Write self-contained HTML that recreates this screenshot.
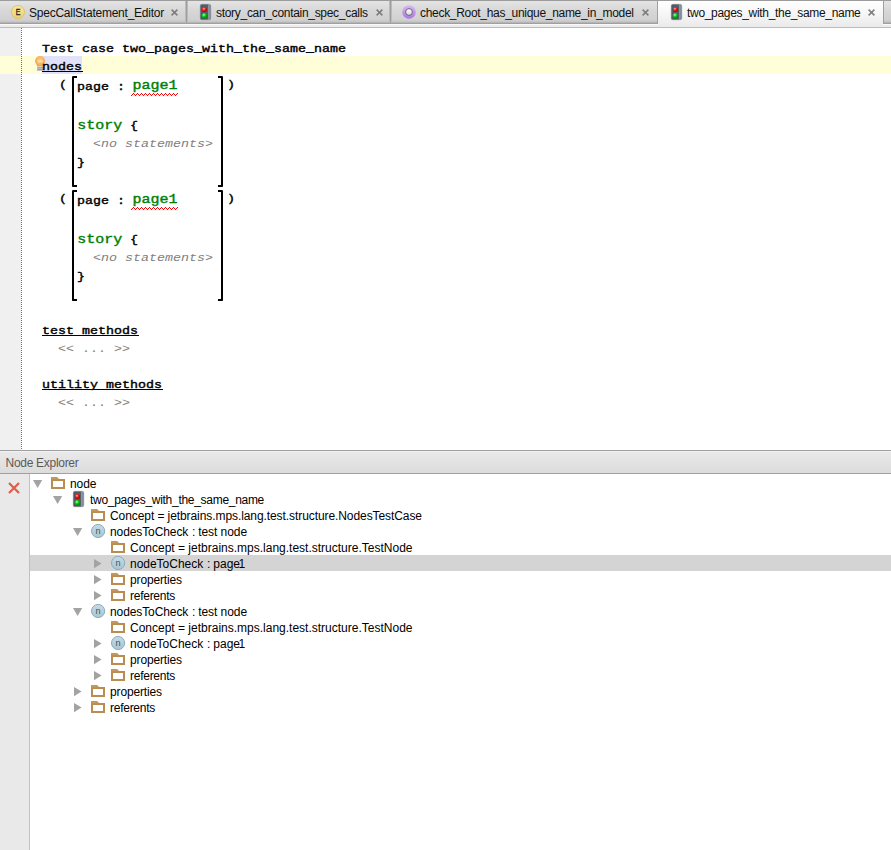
<!DOCTYPE html>
<html><head><meta charset="utf-8"><title>two_pages_with_the_same_name</title>
<style>
html,body{margin:0;padding:0;background:#fff;}
body{width:891px;height:850px;position:relative;overflow:hidden;font-family:"Liberation Sans",sans-serif;font-size:12px;color:#000;}
.abs{position:absolute;}
svg{position:absolute;overflow:visible;}
#tabbar{left:0;top:0;width:891px;height:24px;background:linear-gradient(#9c9c9c 0,#9c9c9c 1px,#e4e4e4 1px,#e2e2e2 3px,#d8d8d8 10px,#d0d0d0 20px,#c3c3c3 22px,#a0a0a0 23.3px,#9e9e9e 24px);}
#tabstrip{left:0;top:24px;width:891px;height:3px;background:linear-gradient(#fafafa 0,#fafafa 1px,#ececec 1px,#ebebeb 3px);}
#tabline{left:0;top:27px;width:891px;height:1px;background:#bcbcbc;}
.tabsep{top:1px;width:1px;height:22px;background:#9e9e9e;border-left:1px solid rgba(255,255,255,0.3);border-right:1px solid rgba(255,255,255,0.3);margin-left:-1px;}
.tabtxt{top:5px;height:16px;line-height:16px;white-space:pre;color:#111;}
#seltab{left:658px;top:1px;width:225px;height:26px;background:linear-gradient(#ffffff,#f6f6f6 50%,#eaeaea);}
.seledge{top:1px;width:1px;height:23px;background:#a0a0a0;}
#gutter{left:0;top:28px;width:21px;height:422px;background:#f0f0f0;}
#gutline{left:21px;top:28px;width:1px;height:422px;background:repeating-linear-gradient(#707070 0,#707070 1px,rgba(255,255,255,0) 1px,rgba(255,255,255,0) 2px);}
#curline{left:0;top:56px;width:891px;height:18px;background:#fffed9;}
#sel{left:42px;top:56px;width:40px;height:18px;background:#e1e1fa;}
.code{font-family:"Liberation Mono",monospace;font-size:13.333px;font-weight:normal;-webkit-text-stroke:0.45px currentColor;white-space:pre;line-height:20px;height:20px;color:#000;transform:scaleY(0.85);transform-origin:0 0;}
.kw{color:#007f00;}
.big{font-size:15px;}
.gr{color:#808080;font-weight:normal;-webkit-text-stroke:0;}
.it{font-style:italic;}
.ul{height:1px;background:#000;}
.br{box-sizing:border-box;width:5px;height:111px;border:2px solid #000;}
.brl{border-right:none;border-radius:1.5px 0 0 1.5px;}
.brr{border-left:none;border-radius:0 1.5px 1.5px 0;}
#split{left:0;top:450px;width:891px;height:1px;background:#a0a0a0;}
#nehead{left:0;top:451px;width:891px;height:22px;background:linear-gradient(#f2f2f2 0,#f2f2f2 1px,#e9e9e9 1px,#dcdcdc 22px);}
#neheadline{left:0;top:473px;width:891px;height:1px;background:#a0a0a0;}
#netitle{left:5px;top:455px;line-height:16px;color:#5a5a5a;white-space:pre;}
#nestrip{left:0;top:474px;width:29px;height:376px;background:#e9e9e9;border-right:1px solid #c0c0c0;}
#selrow{left:30px;top:555px;width:861px;height:16px;background:#d4d4d4;}
.row{height:16px;line-height:16px;white-space:pre;color:#000;}
</style></head>
<body>
<div id="tabbar" class="abs"></div><div id="tabstrip" class="abs"></div><div id="tabline" class="abs"></div><div id="seltab" class="abs"></div><div class="abs seledge" style="left:657px"></div><div class="abs seledge" style="left:883px"></div>
<div class="abs tabsep" style="left:186px"></div><div class="abs tabsep" style="left:390px"></div>
<svg style="left:11px;top:5px" width="14" height="14" viewBox="0 0 14 14"><defs><linearGradient id="eg" x1="0" x2="0" y1="0" y2="1"><stop offset="0" stop-color="#f8e9a0"/><stop offset="1" stop-color="#ecd06a"/></linearGradient></defs><circle cx="7" cy="7" r="6.5" fill="url(#eg)" stroke="#d9bd5c" stroke-width="0.8"/><text transform="translate(7 10) scale(0.84 1)" x="0" y="0" font-family="Liberation Sans, sans-serif" font-size="8.4" text-anchor="middle" fill="#22222e" stroke="#22222e" stroke-width="0.3">E</text></svg>
<div class="abs tabtxt" style="left:29px;top:5px;letter-spacing:-0.240px;">SpecCallStatement_Editor</div>
<svg style="left:171px;top:9px" width="7" height="7" viewBox="0 0 7 7"><path d="M0.6 0.6L6.4 6.4M6.4 0.6L0.6 6.4" stroke="#7d7d7d" stroke-width="1.5" fill="none"/></svg>
<svg style="left:200px;top:4px" width="11" height="16" viewBox="0 0 11 16"><defs><linearGradient id="tl200" x1="0" x2="1" y1="0" y2="0"><stop offset="0" stop-color="#4e5763"/><stop offset="0.70" stop-color="#566069"/><stop offset="0.78" stop-color="#8c96a1"/><stop offset="1" stop-color="#7b8590"/></linearGradient><radialGradient id="rd200" cx="0.4" cy="0.35" r="0.65"><stop offset="0" stop-color="#ffb0b0"/><stop offset="0.45" stop-color="#f02020"/><stop offset="1" stop-color="#a00000"/></radialGradient><radialGradient id="gn200" cx="0.4" cy="0.35" r="0.65"><stop offset="0" stop-color="#b0ffb0"/><stop offset="0.45" stop-color="#10d020"/><stop offset="1" stop-color="#008000"/></radialGradient></defs><rect x="0.25" y="0.25" width="10.5" height="15.5" rx="1.6" fill="url(#tl200)" stroke="#7a828e" stroke-width="0.5"/><circle cx="4.4" cy="5.5" r="2.6" fill="url(#rd200)"/><circle cx="4.4" cy="11.7" r="2.8" fill="url(#gn200)"/></svg>
<div class="abs tabtxt" style="left:216px;top:5px;letter-spacing:-0.300px;">story_can_contain_spec_calls</div>
<svg style="left:376px;top:9px" width="7" height="7" viewBox="0 0 7 7"><path d="M0.6 0.6L6.4 6.4M6.4 0.6L0.6 6.4" stroke="#7d7d7d" stroke-width="1.5" fill="none"/></svg>
<svg style="left:402px;top:5px" width="14" height="14" viewBox="0 0 14 14"><defs><linearGradient id="pg" x1="0" x2="0" y1="0" y2="1"><stop offset="0" stop-color="#d9b8f4"/><stop offset="1" stop-color="#a877e0"/></linearGradient><linearGradient id="pw" x1="0" x2="0" y1="0" y2="1"><stop offset="0" stop-color="#ffffff"/><stop offset="1" stop-color="#d8d8d8"/></linearGradient></defs><circle cx="7" cy="7" r="6.8" fill="url(#pg)"/><circle cx="7" cy="7" r="3.4" fill="url(#pw)" stroke="#6a6078" stroke-width="1"/></svg>
<div class="abs tabtxt" style="left:420px;top:5px;letter-spacing:-0.300px;">check_Root_has_unique_name_in_model</div>
<svg style="left:642px;top:9px" width="7" height="7" viewBox="0 0 7 7"><path d="M0.6 0.6L6.4 6.4M6.4 0.6L0.6 6.4" stroke="#7d7d7d" stroke-width="1.5" fill="none"/></svg>
<svg style="left:671px;top:4px" width="11" height="16" viewBox="0 0 11 16"><defs><linearGradient id="tl671" x1="0" x2="1" y1="0" y2="0"><stop offset="0" stop-color="#4e5763"/><stop offset="0.70" stop-color="#566069"/><stop offset="0.78" stop-color="#8c96a1"/><stop offset="1" stop-color="#7b8590"/></linearGradient><radialGradient id="rd671" cx="0.4" cy="0.35" r="0.65"><stop offset="0" stop-color="#ffb0b0"/><stop offset="0.45" stop-color="#f02020"/><stop offset="1" stop-color="#a00000"/></radialGradient><radialGradient id="gn671" cx="0.4" cy="0.35" r="0.65"><stop offset="0" stop-color="#b0ffb0"/><stop offset="0.45" stop-color="#10d020"/><stop offset="1" stop-color="#008000"/></radialGradient></defs><rect x="0.25" y="0.25" width="10.5" height="15.5" rx="1.6" fill="url(#tl671)" stroke="#7a828e" stroke-width="0.5"/><circle cx="4.4" cy="5.5" r="2.6" fill="url(#rd671)"/><circle cx="4.4" cy="11.7" r="2.8" fill="url(#gn671)"/></svg>
<div class="abs tabtxt" style="left:687px;top:5px;letter-spacing:-0.310px;">two_pages_with_the_same_name</div>
<svg style="left:868px;top:9px" width="7" height="7" viewBox="0 0 7 7"><path d="M0.6 0.6L6.4 6.4M6.4 0.6L0.6 6.4" stroke="#7d7d7d" stroke-width="1.5" fill="none"/></svg>
<div id="gutter" class="abs"></div><div id="curline" class="abs"></div><div id="gutline" class="abs"></div><div id="sel" class="abs"></div>
<svg style="left:35px;top:56px" width="11" height="16" viewBox="0 0 11 16"><defs><radialGradient id="bg" cx="0.5" cy="0.42" r="0.62"><stop offset="0" stop-color="#fbcf8c"/><stop offset="0.6" stop-color="#f5b562"/><stop offset="1" stop-color="#eb9c40"/></radialGradient></defs><path d="M5.1 0 A5.1 5.1 0 0 1 10.2 5.1 C10.2 7.6 8.3 8.4 8 10.4 L2.2 10.4 C1.9 8.4 0 7.6 0 5.1 A5.1 5.1 0 0 1 5.1 0Z" fill="url(#bg)"/><path d="M2.7 4.3L3.9 6.4L5.1 4.3L6.3 6.4L7.5 4.3" stroke="#fdebc8" stroke-width="0.8" fill="none"/><rect x="2.1" y="10.4" width="6" height="4.6" fill="#d2d2d2"/><rect x="2.1" y="11.3" width="6" height="1" fill="#949494"/><rect x="2.1" y="13.2" width="6" height="1" fill="#949494"/></svg>
<div class="abs code" style="left:42px;top:40.6px;">Test case two_pages_with_the_same_name</div>
<div class="abs code" style="left:42px;top:58.6px;">nodes</div>
<div class="abs ul" style="left:42px;top:71px;width:41px"></div>
<div class="abs code" style="left:59px;top:76.6px;">(</div>
<div class="abs code" style="left:227px;top:76.6px;">)</div>
<div class="abs br brl" style="left:72px;top:76px"></div>
<div class="abs br brr" style="left:218px;top:76px"></div>
<div class="abs code" style="left:77px;top:78.6px;">page :</div>
<div class="abs code kw big" style="left:132.5px;top:78.1px;">page1</div>
<svg style="left:131px;top:93px" width="47" height="3" viewBox="0 0 47 3"><path d="M0 2h1v1h-1zM1 1h1v1h-1zM2 0h1v1h-1zM3 1h1v1h-1zM4 2h1v1h-1zM5 1h1v1h-1zM6 0h1v1h-1zM7 1h1v1h-1zM8 2h1v1h-1zM9 1h1v1h-1zM10 0h1v1h-1zM11 1h1v1h-1zM12 2h1v1h-1zM13 1h1v1h-1zM14 0h1v1h-1zM15 1h1v1h-1zM16 2h1v1h-1zM17 1h1v1h-1zM18 0h1v1h-1zM19 1h1v1h-1zM20 2h1v1h-1zM21 1h1v1h-1zM22 0h1v1h-1zM23 1h1v1h-1zM24 2h1v1h-1zM25 1h1v1h-1zM26 0h1v1h-1zM27 1h1v1h-1zM28 2h1v1h-1zM29 1h1v1h-1zM30 0h1v1h-1zM31 1h1v1h-1zM32 2h1v1h-1zM33 1h1v1h-1zM34 0h1v1h-1zM35 1h1v1h-1zM36 2h1v1h-1zM37 1h1v1h-1zM38 0h1v1h-1zM39 1h1v1h-1zM40 2h1v1h-1zM41 1h1v1h-1zM42 0h1v1h-1zM43 1h1v1h-1zM44 2h1v1h-1zM45 1h1v1h-1zM46 0h1v1h-1z" fill="#ff0000" shape-rendering="crispEdges"/></svg>
<div class="abs code kw big" style="left:77.3px;top:118.1px;">story</div>
<div class="abs code" style="left:130px;top:117.6px;">{</div>
<div class="abs code gr it" style="left:93px;top:136.2px;">&lt;no statements&gt;</div>
<div class="abs code" style="left:77px;top:154.6px;">}</div>
<div class="abs code" style="left:59px;top:190.6px;">(</div>
<div class="abs code" style="left:227px;top:190.6px;">)</div>
<div class="abs br brl" style="left:72px;top:190px"></div>
<div class="abs br brr" style="left:218px;top:190px"></div>
<div class="abs code" style="left:77px;top:192.6px;">page :</div>
<div class="abs code kw big" style="left:132.5px;top:192.1px;">page1</div>
<svg style="left:131px;top:207px" width="47" height="3" viewBox="0 0 47 3"><path d="M0 2h1v1h-1zM1 1h1v1h-1zM2 0h1v1h-1zM3 1h1v1h-1zM4 2h1v1h-1zM5 1h1v1h-1zM6 0h1v1h-1zM7 1h1v1h-1zM8 2h1v1h-1zM9 1h1v1h-1zM10 0h1v1h-1zM11 1h1v1h-1zM12 2h1v1h-1zM13 1h1v1h-1zM14 0h1v1h-1zM15 1h1v1h-1zM16 2h1v1h-1zM17 1h1v1h-1zM18 0h1v1h-1zM19 1h1v1h-1zM20 2h1v1h-1zM21 1h1v1h-1zM22 0h1v1h-1zM23 1h1v1h-1zM24 2h1v1h-1zM25 1h1v1h-1zM26 0h1v1h-1zM27 1h1v1h-1zM28 2h1v1h-1zM29 1h1v1h-1zM30 0h1v1h-1zM31 1h1v1h-1zM32 2h1v1h-1zM33 1h1v1h-1zM34 0h1v1h-1zM35 1h1v1h-1zM36 2h1v1h-1zM37 1h1v1h-1zM38 0h1v1h-1zM39 1h1v1h-1zM40 2h1v1h-1zM41 1h1v1h-1zM42 0h1v1h-1zM43 1h1v1h-1zM44 2h1v1h-1zM45 1h1v1h-1zM46 0h1v1h-1z" fill="#ff0000" shape-rendering="crispEdges"/></svg>
<div class="abs code kw big" style="left:77.3px;top:232.1px;">story</div>
<div class="abs code" style="left:130px;top:231.6px;">{</div>
<div class="abs code gr it" style="left:93px;top:250.20000000000002px;">&lt;no statements&gt;</div>
<div class="abs code" style="left:77px;top:268.6px;">}</div>
<div class="abs code" style="left:42px;top:322.6px;">test methods</div>
<div class="abs ul" style="left:42px;top:335px;width:97px"></div>
<div class="abs code gr" style="left:58px;top:340.6px;">&lt;&lt; ... &gt;&gt;</div>
<div class="abs code" style="left:42px;top:376.6px;">utility methods</div>
<div class="abs ul" style="left:42px;top:389px;width:121px"></div>
<div class="abs code gr" style="left:58px;top:394.6px;">&lt;&lt; ... &gt;&gt;</div>
<div id="split" class="abs"></div><div id="nehead" class="abs"></div><div id="neheadline" class="abs"></div>
<div class="abs " style="left:5.5px;top:455px;letter-spacing:-0.290px;line-height:16px;color:#5a5a5a;white-space:pre;">Node Explorer</div>
<div id="nestrip" class="abs"></div><div id="selrow" class="abs"></div>
<svg style="left:8px;top:482px" width="12" height="12" viewBox="0 0 12 12"><path d="M1 1L11 11M11 1L1 11" stroke="#e05c48" stroke-width="2.2" fill="none"/></svg>
<svg style="left:33px;top:480px" width="10" height="8" viewBox="0 0 10 8"><path d="M0 0L9.2 0L4.6 8Z" fill="#a3a3a3"/></svg>
<svg style="left:51px;top:477px" width="14" height="12" viewBox="0 0 14 12"><path d="M0 0.4 Q0 0 0.4 0 L6 0 L8 2 L14 2 L14 12 L0 12 Z" fill="#b98d52"/><path d="M0.3 0.3 L5.9 0.3 L7.6 2.2 L0.3 2.2Z" fill="#c29a62"/><rect x="2" y="4" width="10" height="6" fill="#fff"/></svg>
<div class="abs row" style="left:70px;top:476px;letter-spacing:-0.050px;">node</div>
<svg style="left:53px;top:496px" width="10" height="8" viewBox="0 0 10 8"><path d="M0 0L9.2 0L4.6 8Z" fill="#a3a3a3"/></svg>
<svg style="left:73px;top:491px" width="11" height="16" viewBox="0 0 11 16"><defs><linearGradient id="tl73" x1="0" x2="1" y1="0" y2="0"><stop offset="0" stop-color="#4e5763"/><stop offset="0.70" stop-color="#566069"/><stop offset="0.78" stop-color="#8c96a1"/><stop offset="1" stop-color="#7b8590"/></linearGradient><radialGradient id="rd73" cx="0.4" cy="0.35" r="0.65"><stop offset="0" stop-color="#ffb0b0"/><stop offset="0.45" stop-color="#f02020"/><stop offset="1" stop-color="#a00000"/></radialGradient><radialGradient id="gn73" cx="0.4" cy="0.35" r="0.65"><stop offset="0" stop-color="#b0ffb0"/><stop offset="0.45" stop-color="#10d020"/><stop offset="1" stop-color="#008000"/></radialGradient></defs><rect x="0.25" y="0.25" width="10.5" height="15.5" rx="1.6" fill="url(#tl73)" stroke="#7a828e" stroke-width="0.5"/><circle cx="4.4" cy="5.5" r="2.6" fill="url(#rd73)"/><circle cx="4.4" cy="11.7" r="2.8" fill="url(#gn73)"/></svg>
<div class="abs row" style="left:90px;top:492px;letter-spacing:-0.290px;">two_pages_with_the_same_name</div>
<svg style="left:91px;top:509px" width="14" height="12" viewBox="0 0 14 12"><path d="M0 0.4 Q0 0 0.4 0 L6 0 L8 2 L14 2 L14 12 L0 12 Z" fill="#b98d52"/><path d="M0.3 0.3 L5.9 0.3 L7.6 2.2 L0.3 2.2Z" fill="#c29a62"/><rect x="2" y="4" width="10" height="6" fill="#fff"/></svg>
<div class="abs row" style="left:110px;top:508px;letter-spacing:-0.080px;">Concept = jetbrains.mps.lang.test.structure.NodesTestCase</div>
<svg style="left:73px;top:528px" width="10" height="8" viewBox="0 0 10 8"><path d="M0 0L9.2 0L4.6 8Z" fill="#a3a3a3"/></svg>
<svg style="left:90px;top:523px" width="16" height="16" viewBox="0 0 16 16"><defs><linearGradient id="ng90523" x1="0" x2="0" y1="0" y2="1"><stop offset="0" stop-color="#c6dbe4"/><stop offset="1" stop-color="#a7c6d4"/></linearGradient></defs><circle cx="8.1" cy="8" r="6.6" fill="url(#ng90523)" stroke="#8eacba" stroke-width="1"/><text x="8.1" y="11" font-family="Liberation Sans, sans-serif" font-size="9.2" text-anchor="middle" fill="#48525c">n</text></svg>
<div class="abs row" style="left:110px;top:524px;letter-spacing:-0.100px;">nodesToCheck</div>
<div class="abs row" style="left:192px;top:524px;">:</div>
<div class="abs row" style="left:198.2px;top:524px;letter-spacing:-0.060px;">test node</div>
<svg style="left:111px;top:541px" width="14" height="12" viewBox="0 0 14 12"><path d="M0 0.4 Q0 0 0.4 0 L6 0 L8 2 L14 2 L14 12 L0 12 Z" fill="#b98d52"/><path d="M0.3 0.3 L5.9 0.3 L7.6 2.2 L0.3 2.2Z" fill="#c29a62"/><rect x="2" y="4" width="10" height="6" fill="#fff"/></svg>
<div class="abs row" style="left:130px;top:540px;">Concept = jetbrains.mps.lang.test.structure.TestNode</div>
<svg style="left:94px;top:559px" width="8" height="10" viewBox="0 0 8 10"><path d="M0 0L0 9.2L7.6 4.6Z" fill="#a3a3a3"/></svg>
<svg style="left:110px;top:555px" width="16" height="16" viewBox="0 0 16 16"><defs><linearGradient id="ng110555" x1="0" x2="0" y1="0" y2="1"><stop offset="0" stop-color="#c6dbe4"/><stop offset="1" stop-color="#a7c6d4"/></linearGradient></defs><circle cx="8.1" cy="8" r="6.6" fill="url(#ng110555)" stroke="#8eacba" stroke-width="1"/><text x="8.1" y="11" font-family="Liberation Sans, sans-serif" font-size="9.2" text-anchor="middle" fill="#48525c">n</text></svg>
<div class="abs row" style="left:130px;top:556px;letter-spacing:-0.020px;">nodeToCheck</div>
<div class="abs row" style="left:207px;top:556px;">:</div>
<div class="abs row" style="left:213.3px;top:556px;">page</div>
<div class="abs row" style="left:238.4px;top:556px;">1</div>
<svg style="left:94px;top:575px" width="8" height="10" viewBox="0 0 8 10"><path d="M0 0L0 9.2L7.6 4.6Z" fill="#a3a3a3"/></svg>
<svg style="left:111px;top:573px" width="14" height="12" viewBox="0 0 14 12"><path d="M0 0.4 Q0 0 0.4 0 L6 0 L8 2 L14 2 L14 12 L0 12 Z" fill="#b98d52"/><path d="M0.3 0.3 L5.9 0.3 L7.6 2.2 L0.3 2.2Z" fill="#c29a62"/><rect x="2" y="4" width="10" height="6" fill="#fff"/></svg>
<div class="abs row" style="left:130px;top:572px;letter-spacing:-0.140px;">properties</div>
<svg style="left:94px;top:591px" width="8" height="10" viewBox="0 0 8 10"><path d="M0 0L0 9.2L7.6 4.6Z" fill="#a3a3a3"/></svg>
<svg style="left:111px;top:589px" width="14" height="12" viewBox="0 0 14 12"><path d="M0 0.4 Q0 0 0.4 0 L6 0 L8 2 L14 2 L14 12 L0 12 Z" fill="#b98d52"/><path d="M0.3 0.3 L5.9 0.3 L7.6 2.2 L0.3 2.2Z" fill="#c29a62"/><rect x="2" y="4" width="10" height="6" fill="#fff"/></svg>
<div class="abs row" style="left:130px;top:588px;letter-spacing:-0.260px;">referents</div>
<svg style="left:73px;top:608px" width="10" height="8" viewBox="0 0 10 8"><path d="M0 0L9.2 0L4.6 8Z" fill="#a3a3a3"/></svg>
<svg style="left:90px;top:603px" width="16" height="16" viewBox="0 0 16 16"><defs><linearGradient id="ng90603" x1="0" x2="0" y1="0" y2="1"><stop offset="0" stop-color="#c6dbe4"/><stop offset="1" stop-color="#a7c6d4"/></linearGradient></defs><circle cx="8.1" cy="8" r="6.6" fill="url(#ng90603)" stroke="#8eacba" stroke-width="1"/><text x="8.1" y="11" font-family="Liberation Sans, sans-serif" font-size="9.2" text-anchor="middle" fill="#48525c">n</text></svg>
<div class="abs row" style="left:110px;top:604px;letter-spacing:-0.100px;">nodesToCheck</div>
<div class="abs row" style="left:192px;top:604px;">:</div>
<div class="abs row" style="left:198.2px;top:604px;letter-spacing:-0.060px;">test node</div>
<svg style="left:111px;top:621px" width="14" height="12" viewBox="0 0 14 12"><path d="M0 0.4 Q0 0 0.4 0 L6 0 L8 2 L14 2 L14 12 L0 12 Z" fill="#b98d52"/><path d="M0.3 0.3 L5.9 0.3 L7.6 2.2 L0.3 2.2Z" fill="#c29a62"/><rect x="2" y="4" width="10" height="6" fill="#fff"/></svg>
<div class="abs row" style="left:130px;top:620px;">Concept = jetbrains.mps.lang.test.structure.TestNode</div>
<svg style="left:94px;top:639px" width="8" height="10" viewBox="0 0 8 10"><path d="M0 0L0 9.2L7.6 4.6Z" fill="#a3a3a3"/></svg>
<svg style="left:110px;top:635px" width="16" height="16" viewBox="0 0 16 16"><defs><linearGradient id="ng110635" x1="0" x2="0" y1="0" y2="1"><stop offset="0" stop-color="#c6dbe4"/><stop offset="1" stop-color="#a7c6d4"/></linearGradient></defs><circle cx="8.1" cy="8" r="6.6" fill="url(#ng110635)" stroke="#8eacba" stroke-width="1"/><text x="8.1" y="11" font-family="Liberation Sans, sans-serif" font-size="9.2" text-anchor="middle" fill="#48525c">n</text></svg>
<div class="abs row" style="left:130px;top:636px;letter-spacing:-0.020px;">nodeToCheck</div>
<div class="abs row" style="left:207px;top:636px;">:</div>
<div class="abs row" style="left:213.3px;top:636px;">page</div>
<div class="abs row" style="left:238.4px;top:636px;">1</div>
<svg style="left:94px;top:655px" width="8" height="10" viewBox="0 0 8 10"><path d="M0 0L0 9.2L7.6 4.6Z" fill="#a3a3a3"/></svg>
<svg style="left:111px;top:653px" width="14" height="12" viewBox="0 0 14 12"><path d="M0 0.4 Q0 0 0.4 0 L6 0 L8 2 L14 2 L14 12 L0 12 Z" fill="#b98d52"/><path d="M0.3 0.3 L5.9 0.3 L7.6 2.2 L0.3 2.2Z" fill="#c29a62"/><rect x="2" y="4" width="10" height="6" fill="#fff"/></svg>
<div class="abs row" style="left:130px;top:652px;letter-spacing:-0.140px;">properties</div>
<svg style="left:94px;top:671px" width="8" height="10" viewBox="0 0 8 10"><path d="M0 0L0 9.2L7.6 4.6Z" fill="#a3a3a3"/></svg>
<svg style="left:111px;top:669px" width="14" height="12" viewBox="0 0 14 12"><path d="M0 0.4 Q0 0 0.4 0 L6 0 L8 2 L14 2 L14 12 L0 12 Z" fill="#b98d52"/><path d="M0.3 0.3 L5.9 0.3 L7.6 2.2 L0.3 2.2Z" fill="#c29a62"/><rect x="2" y="4" width="10" height="6" fill="#fff"/></svg>
<div class="abs row" style="left:130px;top:668px;letter-spacing:-0.260px;">referents</div>
<svg style="left:74px;top:687px" width="8" height="10" viewBox="0 0 8 10"><path d="M0 0L0 9.2L7.6 4.6Z" fill="#a3a3a3"/></svg>
<svg style="left:91px;top:685px" width="14" height="12" viewBox="0 0 14 12"><path d="M0 0.4 Q0 0 0.4 0 L6 0 L8 2 L14 2 L14 12 L0 12 Z" fill="#b98d52"/><path d="M0.3 0.3 L5.9 0.3 L7.6 2.2 L0.3 2.2Z" fill="#c29a62"/><rect x="2" y="4" width="10" height="6" fill="#fff"/></svg>
<div class="abs row" style="left:110px;top:684px;letter-spacing:-0.140px;">properties</div>
<svg style="left:74px;top:703px" width="8" height="10" viewBox="0 0 8 10"><path d="M0 0L0 9.2L7.6 4.6Z" fill="#a3a3a3"/></svg>
<svg style="left:91px;top:701px" width="14" height="12" viewBox="0 0 14 12"><path d="M0 0.4 Q0 0 0.4 0 L6 0 L8 2 L14 2 L14 12 L0 12 Z" fill="#b98d52"/><path d="M0.3 0.3 L5.9 0.3 L7.6 2.2 L0.3 2.2Z" fill="#c29a62"/><rect x="2" y="4" width="10" height="6" fill="#fff"/></svg>
<div class="abs row" style="left:110px;top:700px;letter-spacing:-0.260px;">referents</div>
</body></html>
